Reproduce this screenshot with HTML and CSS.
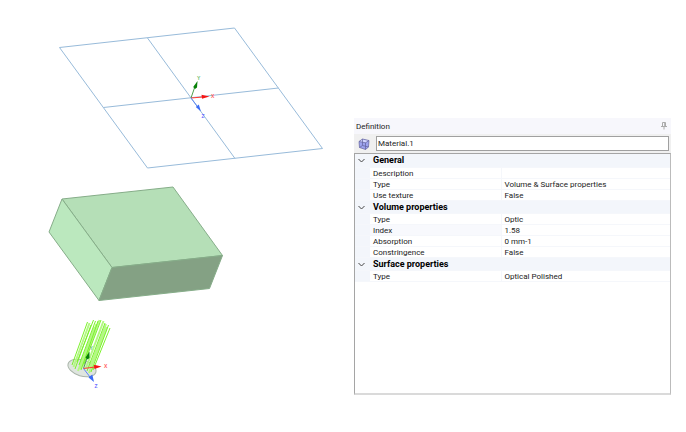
FILE: index.html
```html
<!DOCTYPE html>
<html lang="en">
<head>
<meta charset="utf-8">
<title>Definition</title>
<link rel="stylesheet" href="styles.css">
</head>
<body>
<main class="workspace">
  <svg class="scene" viewBox="0 0 354 432" role="img" aria-label="3D view">
    <g class="plane">
      <path d="M59.5 47.500L234.500 28L322.500 148.500L147.500 168ZM147.500 38L235 158.500M103.500 107.500L278.500 88"/>
    </g>
    <g class="axes">
      <path class="axis-y" d="M191 98L195.500 85"/><path class="tip-y" d="M197.500 81L197 87.500L195 89L193.200 87Z"/>
      <path class="axis-x" d="M191 98L203 97"/><path class="tip-x" d="M209.500 96.500L201.500 94.800L202 98.700Z"/>
      <path class="axis-z" d="M191 98L197 106"/><path class="tip-z" d="M201 111.500L198.800 104.500L195.800 107Z"/>
      <text class="label-y" x="197" y="80">Y</text>
      <text class="label-x" x="211" y="98">X</text>
      <text class="label-z" x="201.500" y="118">Z</text>
    </g>
    <g class="solid">
      <path class="face-top" d="M62 199L173 187L222.500 255.500L112 267.500Z"/>
      <path class="face-left" d="M62 199L112 267.500L99 300.500L49 232Z"/>
      <path class="face-front" d="M112 267.500L222.500 255.500L209.500 288.500L99 300.500Z"/>
    </g>
    <ellipse class="source" cx="82" cy="368" rx="14.500" ry="8" transform="rotate(17 82 368)"/>
    <g class="rays">
      <path class="thin" d="M73.500 367L89.500 323M80 369L96.500 324M82.500 366L99.500 320M86 368L103.500 321M89 373L107 327M78 371L94.500 327M90 367L106 324"/>
      <path d="M72 365L87.500 322M75 369L91 325M77 362L93.500 320M81 370L98 321M84 364L101 320M87 371L105 323M91 372L108.500 325M93 370L110 328M79 365L95.500 321"/>
    </g>
    <g class="axes">
      <path class="axis-y" d="M83.500 368.500L88 355"/><path class="tip-y" d="M89.500 351.500L89.500 358L87.500 359.500L85.500 357.500Z"/>
      <path class="axis-x" d="M83.500 368.500L95 367"/><path class="tip-x" d="M101.500 366.500L94 364.800L94.500 369Z"/>
      <path class="axis-z" d="M83.500 368.500L90 377"/><path class="tip-z" d="M94 382L92.300 374.500L88.500 377.500Z"/>
      <text class="label-y" x="89.500" y="350">Y</text>
      <text class="label-x" x="104" y="368">X</text>
      <text class="label-z" x="94.500" y="388">Z</text>
    </g>
  </svg>

  <section class="panel" aria-labelledby="panel-title">
    <header class="titlebar">
      <h1 id="panel-title">Definition</h1>
      <button class="pin" type="button" aria-label="Pin panel">
        <svg viewBox="0 0 6 8"><path d="M1.500 0.500H4.500V4.500H1.500ZM3.700 0.500V4.500M0 4.500H6M3 4.500V7.500"/></svg>
      </button>
    </header>
    <div class="namebar">
      <svg class="cube" viewBox="0 0 12 12" aria-hidden="true">
        <path class="cube-body" d="M1 3.500L4.500 1L11 2.500L10.500 9L7.500 11.500L1.500 9.500Z"/>
        <path class="cube-top" d="M1 3.500L4.500 1L11 2.500L7.500 4.800Z"/>
        <path class="cube-edge" d="M1 3.500L4.500 1L11 2.500L10.500 9L7.500 11.500L1.500 9.500ZM1 3.500L7.500 4.800L11 2.500M7.500 4.800V11.500M4.500 1V7.500L10.500 9M4.500 7.500L1.500 9.500"/>
      </svg>
      <input class="name" type="text" value="Material.1" aria-label="Name">
    </div>
    <div class="properties">
      <table>
        <colgroup><col class="gutter"><col class="key"><col></colgroup>
        <tbody>
          <tr class="group"><td><button type="button" aria-label="Collapse General"><svg viewBox="0 0 7 5"><path d="M0.500 1L3.500 4L6.500 1"/></svg></button></td><th colspan="2" scope="rowgroup">General</th></tr>
          <tr><td></td><th scope="row">Description</th><td></td></tr>
          <tr><td></td><th scope="row">Type</th><td>Volume &amp; Surface properties</td></tr>
          <tr><td></td><th scope="row">Use texture</th><td>False</td></tr>
        </tbody>
        <tbody>
          <tr class="group"><td><button type="button" aria-label="Collapse Volume properties"><svg viewBox="0 0 7 5"><path d="M0.500 1L3.500 4L6.500 1"/></svg></button></td><th colspan="2" scope="rowgroup">Volume properties</th></tr>
          <tr><td></td><th scope="row">Type</th><td>Optic</td></tr>
          <tr class="selected"><td></td><th scope="row">Index</th><td>1.58</td></tr>
          <tr><td></td><th scope="row">Absorption</th><td>0 mm-1</td></tr>
          <tr><td></td><th scope="row">Constringence</th><td>False</td></tr>
        </tbody>
        <tbody>
          <tr class="group"><td><button type="button" aria-label="Collapse Surface properties"><svg viewBox="0 0 7 5"><path d="M0.500 1L3.500 4L6.500 1"/></svg></button></td><th colspan="2" scope="rowgroup">Surface properties</th></tr>
          <tr><td></td><th scope="row">Type</th><td>Optical Polished</td></tr>
        </tbody>
      </table>
    </div>
  </section>
</main>
</body>
</html>
```
FILE: styles.css
```css
* { box-sizing: border-box; }

body {
  margin: 0;
  background: #fff;
  color: #222;
  font-family: Roboto, Arial, sans-serif;
  font-size: 8px;
}

.workspace {
  display: grid;
  grid-template-columns: 354fr 317fr;
  align-items: start;
  padding-right: 15px;
}

.scene { display: block; width: 100%; }

.plane path { fill: none; stroke: #98bbda; stroke-width: 1; }

.solid path { stroke: #86ad89; stroke-width: 1; stroke-linejoin: round; }
.solid .face-top { fill: #b5dfb7; }
.solid .face-left { fill: #bbe8be; }
.solid .face-front { fill: #84a184; }

.source { fill: #dfe5df; stroke: #aab5aa; stroke-width: 1; }
.rays path { fill: none; stroke: #7cf22c; stroke-width: 1; }
.rays .thin { stroke: #b4f884; stroke-width: 2; }

.axes text { font-family: "Liberation Sans", Arial, sans-serif; font-size: 5px; font-weight: 700; }
.axis-y { stroke: #4fa04f; }
.axis-x { stroke: #ff3b30; }
.axis-z { stroke: #5b86f5; }
.tip-y { fill: #078007; }
.tip-x { fill: #f51414; }
.tip-z { fill: #3b6cf5; }
.label-y { fill: #6fc06f; }
.label-x { fill: #ff6060; }
.label-z { fill: #6a6aff; }

.panel {
  display: flex;
  flex-direction: column;
  min-height: 277px;
  margin-top: 118px;
  background: #f0f0f0;
}

.titlebar {
  display: flex;
  justify-content: space-between;
  align-items: center;
  height: 16px;
  padding: 0 4px 0 2px;
  background: #f7f7fc;
}

h1 { margin: 0; font-size: 8px; font-weight: 400; }

button {
  display: block;
  padding: 0;
  border: 0;
  background: none;
}

button svg { display: block; fill: none; }
.pin svg { width: 6px; height: 8px; stroke: #aaa; stroke-width: 1; }

.namebar {
  display: flex;
  align-items: center;
  gap: 6px;
  height: 19px;
  padding: 0 2px 0 4px;
}

.cube { width: 12px; height: 12px; }
.cube-body { fill: #9da3ee; }
.cube-top { fill: #d3d6ff; }
.cube-edge { fill: none; stroke: #62629c; stroke-width: 0.700; }

.name {
  flex: 1;
  min-width: 0;
  height: 15px;
  padding: 0 1px;
  border: 1px solid #a0a0a0;
  background: #fff;
  color: inherit;
  font: inherit;
}

.properties {
  flex: 1;
  border: 1px solid #a5a5a5;
  border-right-color: #bbb;
  border-bottom: 2px solid #dadada;
  background: #fff;
}

table {
  width: 100%;
  table-layout: fixed;
  border-collapse: collapse;
}

.gutter { width: 15px; }
.key { width: 131px; }

tr { height: 11px; }
td, th {
  padding: 1px 0 0 3px;
  border-bottom: 1px solid #f5f7fb;
  font-weight: 400;
  line-height: 9px;
  text-align: left;
  white-space: nowrap;
}

th + td { border-left: 1px solid #f5f7fb; }
td:first-child { padding-left: 3px; background: #f3f6fb; }

.group { height: 13px; background: #f3f6fb; }
.group th { color: #000; font-size: 9px; font-weight: 700; line-height: 11px; }
.group svg { width: 7px; height: 5px; stroke: #444; stroke-width: 1; }
.selected th { background: #f8f9fd; }
```
